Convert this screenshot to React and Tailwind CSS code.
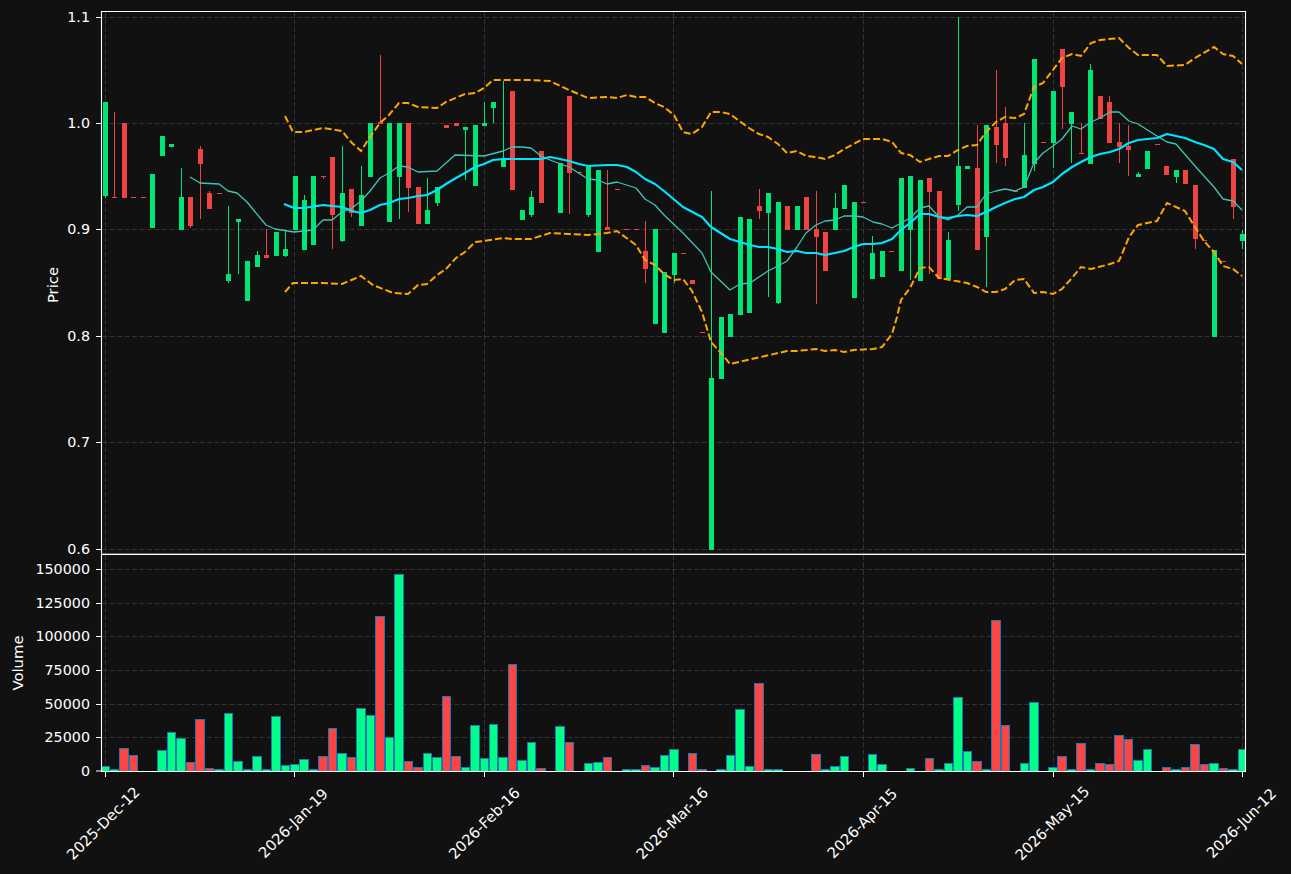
// price + volume chart, all values are pixel positions read off the plot
const GREEN = "#00e676";
const RED = "#ef4444";
const X0 = 105.5;
const STEP = 9.475;
const barX = (i) => X0 + STEP * i;

// [colour, body top, body bottom, wick top, wick bottom]
const candles = [
  ["g", 102, 196, 102, 198], ["r", 197, 198, 112, 198], ["r", 123, 198], ["r", 197, 198], ["r", 197, 198],
  ["g", 174, 228], ["g", 136, 156], ["g", 144, 147], ["g", 197, 230, 168, 230], ["r", 197, 226, 197, 228],
  ["r", 149, 164, 146, 219], ["r", 193, 209, 191, 209], ["r", 193, 194], ["g", 274, 281, 206, 283], ["g", 219, 222, 219, 274],
  ["g", 261, 301], ["g", 255, 267, 251, 267], ["r", 255, 258, 229, 258], ["g", 232, 256], ["g", 249, 256, 230, 257],
  ["g", 176, 230], ["g", 200, 250, 195, 250], ["g", 176, 245], ["r", 176, 177, 176, 179], ["r", 157, 215, 157, 249],
  ["g", 193, 241, 146, 242], ["r", 189, 213, 189, 217], ["g", 195, 226, 166, 226], ["g", 123, 177], ["r", 122, 124, 55, 124],
  ["g", 123, 222], ["g", 123, 177, 123, 219], ["r", 123, 188, 123, 212], ["r", 187, 224], ["g", 210, 224, 178, 224],
  ["g", 187, 203, 187, 206], ["r", 125, 128], ["r", 123, 126], ["g", 127, 130, 127, 180], ["g", 125, 186],
  ["g", 123, 126, 102, 126], ["g", 102, 108, 102, 123], ["g", 160, 167, 81, 167], ["r", 91, 190], ["g", 210, 220],
  ["g", 197, 215, 191, 217], ["r", 151, 203], null, ["g", 163, 213], ["r", 96, 173, 96, 214],
  ["r", 172, 173], ["g", 167, 215, 167, 217], ["g", 170, 252], ["r", 227, 230, 170, 230], ["r", 189, 190],
  ["r", 229, 230], ["r", 229, 230], ["r", 251, 269, 221, 283], ["g", 229, 324], ["g", 272, 333],
  ["g", 253, 275, 253, 283], ["r", 253, 254], ["r", 280, 284], ["r", 332, 333], ["g", 378, 550, 191, 550],
  ["g", 317, 379], ["g", 314, 337], ["g", 217, 315], ["g", 219, 313], ["r", 206, 211, 189, 219],
  ["g", 193, 213, 193, 297], ["g", 202, 303, 202, 304], ["r", 206, 230], ["g", 206, 230], ["r", 197, 230],
  ["r", 229, 237, 191, 304], ["r", 232, 271], ["g", 208, 230, 193, 230], ["g", 185, 209], ["g", 202, 298],
  ["r", 202, 203], ["g", 253, 279, 236, 279], ["g", 251, 277], ["r", 251, 252], ["g", 178, 271],
  ["g", 176, 230, 176, 280], ["g", 180, 281], ["r", 178, 192, 178, 274], ["r", 191, 279], ["g", 240, 279, 232, 279],
  ["g", 166, 205, 17, 211], ["g", 166, 169], ["r", 168, 250, 125, 250], ["g", 125, 237, 125, 287], ["r", 127, 145, 70, 163],
  ["r", 123, 158, 107, 166], ["r", 191, 192], ["g", 155, 188, 123, 188], ["g", 59, 164, 59, 171], ["r", 142, 143],
  ["g", 91, 143, 91, 168], ["r", 49, 87, 49, 129], ["g", 112, 124, 112, 163], ["r", 153, 154, 123, 154], ["g", 70, 164, 64, 164],
  ["r", 96, 119], ["r", 102, 143, 96, 143], ["r", 142, 147, 123, 163], ["r", 146, 150, 125, 176], ["g", 174, 177, 172, 177],
  ["g", 151, 169], ["r", 144, 145], ["r", 166, 175], ["g", 170, 177, 170, 183], ["r", 170, 184],
  ["r", 185, 239, 185, 249], ["r", 240, 241], ["g", 250, 337], ["r", 261, 262], ["r", 159, 207, 159, 219],
  ["g", 234, 241, 230, 249],
];

// [colour, bar top]; baseline is 771, 771 itself means no volume at all
const volumes = [
  ["g", 767], ["g", 770], ["r", 749], ["r", 756], ["g", 771], ["g", 771], ["g", 751], ["g", 733], ["g", 739], ["r", 763],
  ["r", 720], ["r", 769], ["g", 770], ["g", 714], ["g", 762], ["g", 770], ["g", 757], ["g", 770], ["g", 717], ["g", 766],
  ["g", 765], ["g", 760], ["g", 770], ["r", 757], ["r", 729], ["g", 754], ["r", 758], ["g", 709], ["g", 716], ["r", 617],
  ["g", 738], ["g", 575], ["r", 762], ["r", 768], ["g", 754], ["g", 758], ["r", 697], ["r", 757], ["g", 768], ["g", 726],
  ["g", 759], ["g", 725], ["g", 758], ["r", 665], ["g", 761], ["g", 743], ["r", 769], ["g", 771], ["g", 727], ["r", 743],
  ["g", 771], ["g", 764], ["g", 763], ["r", 758], ["g", 771], ["g", 770], ["g", 770], ["r", 766], ["g", 768], ["g", 756],
  ["g", 750], ["g", 771], ["r", 754], ["r", 770], ["g", 771], ["g", 770], ["g", 756], ["g", 710], ["g", 767], ["r", 684],
  ["g", 770], ["g", 770], ["g", 771], ["g", 771], ["g", 771], ["r", 755], ["g", 770], ["g", 767], ["g", 757], ["g", 771],
  ["g", 771], ["g", 755], ["g", 765], ["g", 771], ["g", 771], ["g", 769], ["g", 771], ["r", 759], ["g", 770], ["g", 764],
  ["g", 698], ["g", 752], ["r", 762], ["g", 770], ["r", 621], ["r", 726], ["g", 771], ["g", 764], ["g", 703], ["g", 771],
  ["g", 768], ["r", 757], ["g", 770], ["r", 744], ["g", 770], ["r", 764], ["r", 765], ["r", 736], ["r", 740], ["g", 761],
  ["g", 750], ["g", 771], ["r", 768], ["g", 770], ["r", 768], ["r", 745], ["r", 765], ["g", 764], ["r", 769], ["g", 770],
  ["g", 750],
];

const smaPts = "190,177 200,183 219,184 228,191 237,193 247,202 266,225 275,229 294,232 313,230 323,220 332,220 342,212 352,208 361,201 370,191 380,178 389,173 399,166 408,167 418,172 437,171 455,155 484,156 503,151 512,147 522,147 531,148 541,156 550,160 569,167 588,179 598,180 607,184 617,182 636,188 645,199 655,205 664,215 683,233 702,253 711,272 730,290 740,284 750,283 759,277 768,271 778,266 787,261 797,247 806,233 816,225 825,221 835,220 844,216 854,216 863,217 873,222 882,224 892,228 901,223 910,218 920,208 929,206 939,217 948,220 958,215 967,207 977,207 986,194 996,191 1005,189 1015,191 1024,187 1034,163 1043,153 1053,146 1062,139 1072,126 1081,129 1091,122 1100,118 1110,112 1119,112 1129,121 1138,124 1157,136 1167,142 1176,144 1195,166 1204,176 1214,187 1223,199 1233,201 1242,210";
const emaPts = "284,204 294,208 304,208 323,205 342,207 352,211 361,213 370,210 380,205 389,203 399,199 408,198 418,196 427,195 437,190 446,184 456,178 465,173 475,167 484,164 493,160 503,159 531,159 541,159 550,157 560,159 569,161 579,164 588,166 607,165 617,165 627,167 636,172 645,179 655,184 664,191 683,207 702,217 711,227 730,239 740,242 750,245 759,247 768,247 778,249 787,252 797,251 806,253 816,253 825,255 835,253 844,251 854,247 863,244 873,244 882,243 892,239 901,230 910,223 920,214 929,214 939,217 948,218 958,216 967,215 977,216 986,212 996,207 1005,203 1015,199 1024,197 1034,190 1043,187 1053,182 1062,174 1072,167 1081,162 1091,157 1100,154 1110,152 1119,149 1129,143 1138,140 1157,138 1167,134 1176,136 1185,138 1195,142 1204,145 1214,149 1223,159 1233,162 1242,170";
const upperPts = "285,116 293,132 304,132 323,128 342,131 352,143 361,151 370,137 380,123 389,115 399,103 408,103 418,107 437,108 446,102 465,94 475,93 484,88 493,80 531,80 550,81 569,90 588,98 607,97 617,98 627,95 636,97 645,97 655,103 664,107 674,115 683,132 692,134 702,127 711,112 721,112 730,114 749,128 759,134 768,137 778,144 787,153 797,151 806,156 816,157 825,159 835,155 844,149 863,139 882,139 892,142 901,153 910,155 920,162 929,159 939,156 948,156 958,150 967,146 977,145 986,132 996,122 1005,117 1015,118 1024,114 1034,87 1043,83 1053,70 1062,58 1072,54 1081,56 1091,43 1100,40 1119,38 1129,48 1138,55 1157,55 1167,66 1185,65 1195,58 1214,47 1223,54 1233,56 1242,64";
const lowerPts = "285,292 293,283 323,283 342,284 361,276 373,285 393,293 408,294 418,285 427,284 437,275 446,269 456,258 465,252 475,242 484,241 503,238 512,239 531,239 550,233 569,234 588,235 607,233 617,231 636,245 645,260 655,265 664,274 674,280 683,279 692,291 702,312 711,342 721,353 730,364 787,351 797,351 816,349 825,351 835,350 844,352 854,350 873,349 882,347 892,334 897,317 901,300 910,288 920,268 929,267 939,278 950,280 967,283 977,287 986,292 996,292 1005,289 1015,280 1024,279 1034,293 1043,292 1053,294 1062,289 1072,278 1081,267 1091,269 1110,264 1119,261 1129,237 1138,225 1157,221 1167,203 1185,211 1195,227 1204,241 1214,252 1223,266 1233,269 1242,276";

const gridX = [105.5, 294.5, 484.5, 673.5, 863.5, 1053.5, 1242.5];
const priceTicks = [["1.1", 17.5], ["1.0", 123.5], ["0.9", 229.5], ["0.8", 336.5], ["0.7", 442.5], ["0.6", 549.5]];
const volumeTicks = [["150000", 569.5], ["125000", 603.5], ["100000", 636.5], ["75000", 670.5], ["50000", 704.5], ["25000", 737.5], ["0", 771]];
const dateTicks = [["2025-Dec-12", 103, 105.5], ["2026-Jan-19", 293, 294.5], ["2026-Feb-16", 484, 484.5], ["2026-Mar-16", 672, 673.5], ["2026-Apr-15", 862, 863.5], ["2026-May-15", 1052, 1053.5], ["2026-Jun-12", 1241, 1242.5]];

function Grid({ ticks, top, bottom }) {
  return (
    <g stroke="#333333" strokeWidth="1" strokeDasharray="5 2.5">
      {ticks.map(([label, y]) => (
        <line key={label} x1="102" x2="1246" y1={y} y2={y} />
      ))}
      {gridX.map((x) => (
        <line key={x} x1={x} x2={x} y1={top} y2={bottom} />
      ))}
    </g>
  );
}

function YAxis({ ticks }) {
  return ticks.map(([label, y]) => (
    <g key={label}>
      <line x1="96" x2="101" y1={y} y2={y} stroke="white" strokeWidth="1" />
      <text x="90" y={y - 0.5} textAnchor="end" dominantBaseline="central" className="fill-white text-[14.3px] font-['DejaVu_Sans',sans-serif]">
        {label}
      </text>
    </g>
  ));
}

function Candle({ c, i }) {
  if (!c) return null;
  const [color, top, bottom, wickTop, wickBottom] = c;
  const x = Math.round(barX(i) - 0.5);
  const fill = color === "g" ? GREEN : RED;
  return (
    <g fill={fill}>
      {wickTop !== undefined && <rect x={x} y={wickTop} width="1" height={wickBottom - wickTop} />}
      <rect x={x - 2} y={top} width="5" height={bottom - top} />
    </g>
  );
}

function PricePanel() {
  return (
    <svg viewBox="0 0 1291 554" className="block h-[554px] w-[1291px] shrink-0 overflow-visible">
      <Grid ticks={priceTicks} top={12} bottom={553} />
      <g shapeRendering="crispEdges">
        {candles.map((c, i) => (
          <Candle key={i} c={c} i={i} />
        ))}
      </g>
      <polyline points={smaPts} fill="none" stroke="#40c4b4" strokeWidth="1.3" strokeLinejoin="round" />
      <polyline points={emaPts} fill="none" stroke="#00e5ff" strokeWidth="2.2" strokeLinejoin="round" />
      <polyline points={upperPts} fill="none" stroke="#ffa500" strokeWidth="2" strokeDasharray="7 3" />
      <polyline points={lowerPts} fill="none" stroke="#ffa500" strokeWidth="2" strokeDasharray="7 3" />
      <path d="M101.5 553.5V11.5H1245.5V553.5" fill="none" stroke="white" strokeWidth="1.1" />
      <line x1="101" x2="1246" y1="553.5" y2="553.5" stroke="white" strokeOpacity="0.35" strokeWidth="1" />
      <YAxis ticks={priceTicks} />
      <text transform="translate(52 285) rotate(-90)" textAnchor="middle" dominantBaseline="central" className="fill-white text-[14.8px] font-['DejaVu_Sans',sans-serif]">
        Price
      </text>
    </svg>
  );
}

function VolumePanel() {
  return (
    <svg viewBox="0 554 1291 320" className="block h-[320px] w-[1291px] shrink-0">
      <defs>
        <clipPath id="volume-clip">
          <rect x="102" y="554" width="1143" height="217" />
        </clipPath>
      </defs>
      <Grid ticks={volumeTicks.slice(0, 6)} top={555} bottom={771} />
      <g clipPath="url(#volume-clip)" stroke="#1f77b4" strokeWidth="1" shapeRendering="crispEdges">
        {volumes.map(([color, top], i) => {
          if (top >= 771) return null;
          const left = Math.round(barX(i) - 5) + 0.5;
          const right = Math.round(barX(i) + 4.5) - 0.5;
          return <rect key={i} x={left} y={top - 0.5} width={right - left} height={772 - top} fill={color === "g" ? "#00ff88" : "#ff4444"} />;
        })}
      </g>
      <path d="M101.5 771.5V554.5H1245.5V771.5Z" fill="none" stroke="white" strokeWidth="1.1" />
      <YAxis ticks={volumeTicks} />
      {dateTicks.map(([label, center, tick]) => (
        <g key={label}>
          <line x1={tick} x2={tick} y1="772" y2="777" stroke="white" strokeWidth="1" />
          <text transform={`translate(${center} 823) rotate(-45)`} textAnchor="middle" dominantBaseline="central" className="fill-white text-[14.8px] font-['DejaVu_Sans',sans-serif]">
            {label}
          </text>
        </g>
      ))}
      <text transform="translate(17 663) rotate(-90)" textAnchor="middle" dominantBaseline="central" className="fill-white text-[14.8px] font-['DejaVu_Sans',sans-serif]">
        Volume
      </text>
    </svg>
  );
}

export default function App() {
  return (
    <div className="flex h-[874px] w-[1291px] flex-col overflow-hidden bg-[#111111]">
      <PricePanel />
      <VolumePanel />
    </div>
  );
}
